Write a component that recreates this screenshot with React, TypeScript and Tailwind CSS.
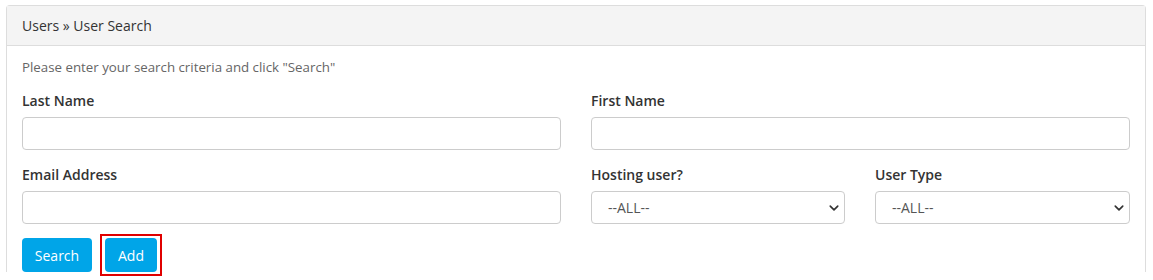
const Chevron = () => (
  <svg
    className="pointer-events-none absolute right-[6px] top-1/2 -translate-y-1/2"
    width="10"
    height="10"
    viewBox="0 0 16 16"
  >
    <path d="M2 5l6 6 6-6" fill="none" stroke="#333" strokeWidth="2.6" strokeLinecap="round" strokeLinejoin="round" />
  </svg>
);

const Field = ({ label }: { label: string }) => (
  <div className="flex flex-col">
    <label className="h-5 text-[14px] leading-5 font-semibold text-[#333]">{label}</label>
    <input
      type="text"
      className="mt-[6px] h-[33px] w-full rounded-[4px] border border-[#ccc] bg-white px-3 text-[14px] outline-none"
    />
  </div>
);

const SelectField = ({ label }: { label: string }) => (
  <div className="flex flex-col">
    <label className="h-5 text-[14px] leading-5 font-semibold text-[#333]">{label}</label>
    <div className="relative mt-[6px]">
      <select className="h-[33px] w-full appearance-none rounded-[4px] border border-[#ccc] bg-white pl-4 text-[14px] text-[#555] outline-none">
        <option>--ALL--</option>
      </select>
      <Chevron />
    </div>
  </div>
);

export default function App() {
  return (
    <div className="bg-white pt-[5px] pl-[6px] pr-[7px] h-[280px]" style={{ fontFamily: '"Open Sans", "Liberation Sans", sans-serif' }}>
      <div className="rounded-t-[4px] border border-b-0 border-[#ddd] bg-white">
        <div className="flex h-[40px] items-center border-b border-[#ddd] bg-[#f4f4f4] px-[15px] text-[14px] text-[#333]">
          Users » User Search
        </div>
        <div className="px-[15px] pt-[11px]">
          <p className="h-5 text-[13.3px] leading-5 text-[#666]">Please enter your search criteria and click "Search"</p>
          <div className="mt-[14px] grid grid-cols-[539px_1fr] gap-x-[30px]">
            <Field label="Last Name" />
            <Field label="First Name" />
          </div>
          <div className="mt-[15px] grid grid-cols-[539px_1fr] gap-x-[30px]">
            <Field label="Email Address" />
            <div className="grid grid-cols-[254px_1fr] gap-x-[30px]">
              <SelectField label="Hosting user?" />
              <SelectField label="User Type" />
            </div>
          </div>
          <div className="mt-[14px] flex gap-[13px]">
            <button className="h-[34px] w-[70px] rounded-[4px] bg-[#00a5e8] text-[14px] text-white">Search</button>
            <div className="relative">
              <button className="h-[34px] w-[52px] rounded-[4px] bg-[#00a5e8] text-[14px] text-white">Add</button>
              <span className="pointer-events-none absolute -top-[4px] -bottom-[4px] -left-[5px] -right-[5px] border-2 border-[#e00000]" />
            </div>
          </div>
        </div>
      </div>
    </div>
  );
}
